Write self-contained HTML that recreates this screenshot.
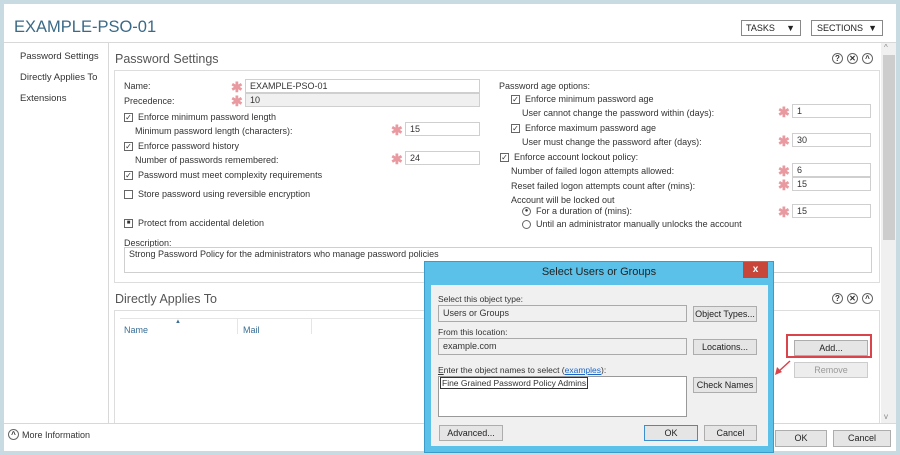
<!DOCTYPE html>
<html><head><meta charset="utf-8"><style>
*{margin:0;padding:0;box-sizing:border-box}
body{width:900px;height:455px;background:#c8dae2;font-family:"Liberation Sans",sans-serif;font-size:9px;color:#333;position:relative;overflow:hidden}
.a{position:absolute;white-space:nowrap}
.inp{position:absolute;border:1px solid #cfcfcf;background:#fff;height:14px;padding:1px 4px;font-size:9px;line-height:11px}
.st{position:absolute;color:#e89aa0;font-size:14px;font-weight:bold;line-height:14px}
.cb{position:absolute;width:9px;height:9px;border:1px solid #666;background:#fff;font-size:8px;line-height:7px;text-align:center}
.btn{position:absolute;border:1px solid #adadad;background:#e5e5e5;text-align:center;font-size:9px;line-height:14px;color:#222}
.ic{position:absolute;width:11px;height:11px;border:1px solid #666;border-radius:50%;font-size:8px;line-height:9px;text-align:center;color:#333;font-weight:bold}
</style></head><body>
<div class="a" style="left:4px;top:4px;width:892px;height:447px;background:#fff"></div>
<div class="a" style="left:14px;top:18px;font-size:16.5px;color:#3a6a88">EXAMPLE-PSO-01</div>
<div class="btn" style="left:741px;top:20px;width:60px;height:16px;background:#fff;border-color:#888;text-align:left;padding-left:4px;font-size:9px">TASKS <span style="position:absolute;right:5px">▼</span></div>
<div class="btn" style="left:811px;top:20px;width:72px;height:16px;background:#fff;border-color:#888;text-align:left;padding-left:5px">SECTIONS <span style="position:absolute;right:5px">▼</span></div>
<div class="a" style="left:4px;top:42px;width:892px;height:1px;background:#d8d8d8"></div>
<div class="a" style="left:108px;top:43px;width:1px;height:380px;background:#d8d8d8"></div>
<div class="a" style="left:20px;top:51px;font-size:9.5px">Password Settings</div>
<div class="a" style="left:20px;top:72px;font-size:9.5px">Directly Applies To</div>
<div class="a" style="left:20px;top:93px;font-size:9.5px">Extensions</div>
<!-- scrollbar -->
<div class="a" style="left:881px;top:43px;width:15px;height:380px;background:#f0f0f0"></div>
<div class="a" style="left:883px;top:55px;width:12px;height:185px;background:#cdcdcd"></div>
<div class="a" style="left:884px;top:43px;font-size:8px;color:#888">^</div>
<div class="a" style="left:884px;top:412px;font-size:8px;color:#888">v</div>
<!-- section1 -->
<div class="a" style="left:115px;top:52px;font-size:12.5px;color:#555">Password Settings</div>
<div class="ic" style="left:832px;top:53px">?</div><div class="ic" style="left:847px;top:53px">✕</div><div class="ic" style="left:862px;top:53px">^</div>
<div class="a" style="left:114px;top:70px;width:766px;height:213px;border:1px solid #ddd"></div>
<div class="a" style="left:124px;top:81px">Name:</div>
<div class="st" style="left:231px;top:80px">✱</div>
<div class="inp" style="left:245px;top:79px;width:235px">EXAMPLE-PSO-01</div>
<div class="a" style="left:124px;top:96px">Precedence:</div>
<div class="st" style="left:231px;top:94px">✱</div>
<div class="inp" style="left:245px;top:93px;width:235px;background:#f0f0f0">10</div>
<div class="cb" style="left:124px;top:113px">✓</div><div class="a" style="left:138px;top:112px">Enforce minimum password length</div>
<div class="a" style="left:135px;top:126px">Minimum password length (characters):</div>
<div class="st" style="left:391px;top:123px">✱</div><div class="inp" style="left:405px;top:122px;width:75px">15</div>
<div class="cb" style="left:124px;top:142px">✓</div><div class="a" style="left:138px;top:141px">Enforce password history</div>
<div class="a" style="left:135px;top:155px">Number of passwords remembered:</div>
<div class="st" style="left:391px;top:152px">✱</div><div class="inp" style="left:405px;top:151px;width:75px">24</div>
<div class="cb" style="left:124px;top:171px">✓</div><div class="a" style="left:138px;top:170px">Password must meet complexity requirements</div>
<div class="cb" style="left:124px;top:190px"></div><div class="a" style="left:138px;top:189px">Store password using reversible encryption</div>
<div class="cb" style="left:124px;top:219px;font-size:6px">■</div><div class="a" style="left:138px;top:218px">Protect from accidental deletion</div>
<div class="a" style="left:499px;top:81px">Password age options:</div>
<div class="cb" style="left:511px;top:95px">✓</div><div class="a" style="left:525px;top:94px">Enforce minimum password age</div>
<div class="a" style="left:522px;top:108px">User cannot change the password within (days):</div>
<div class="st" style="left:778px;top:105px">✱</div><div class="inp" style="left:792px;top:104px;width:79px">1</div>
<div class="cb" style="left:511px;top:124px">✓</div><div class="a" style="left:525px;top:123px">Enforce maximum password age</div>
<div class="a" style="left:522px;top:137px">User must change the password after (days):</div>
<div class="st" style="left:778px;top:134px">✱</div><div class="inp" style="left:792px;top:133px;width:79px">30</div>
<div class="cb" style="left:500px;top:153px">✓</div><div class="a" style="left:514px;top:152px">Enforce account lockout policy:</div>
<div class="a" style="left:511px;top:166px">Number of failed logon attempts allowed:</div>
<div class="st" style="left:778px;top:164px">✱</div><div class="inp" style="left:792px;top:163px;width:79px">6</div>
<div class="a" style="left:511px;top:181px">Reset failed logon attempts count after (mins):</div>
<div class="st" style="left:778px;top:178px">✱</div><div class="inp" style="left:792px;top:177px;width:79px">15</div>
<div class="a" style="left:511px;top:195px">Account will be locked out</div>
<div class="ic" style="left:522px;top:207px;width:9px;height:9px;font-size:6px;line-height:7px">●</div><div class="a" style="left:536px;top:206px">For a duration of (mins):</div>
<div class="st" style="left:778px;top:205px">✱</div><div class="inp" style="left:792px;top:204px;width:79px">15</div>
<div class="ic" style="left:522px;top:220px;width:9px;height:9px"></div><div class="a" style="left:536px;top:219px">Until an administrator manually unlocks the account</div>
<div class="a" style="left:124px;top:238px">Description:</div>
<div class="inp" style="left:124px;top:247px;width:748px;height:26px">Strong Password Policy for the administrators who manage password policies</div>
<!-- section2 -->
<div class="a" style="left:115px;top:292px;font-size:12.5px;color:#555">Directly Applies To</div>
<div class="ic" style="left:832px;top:293px">?</div><div class="ic" style="left:847px;top:293px">✕</div><div class="ic" style="left:862px;top:293px">^</div>
<div class="a" style="left:114px;top:310px;width:766px;height:114px;border:1px solid #ddd;border-bottom:none"></div>
<div class="a" style="left:120px;top:318px;width:520px;height:1px;background:#e5e5e5"></div>
<div class="a" style="left:124px;top:325px;color:#3a6e96">Name</div>
<div class="a" style="left:175px;top:319px;font-size:6px;color:#3a6e96">▲</div>
<div class="a" style="left:237px;top:319px;width:1px;height:15px;background:#e5e5e5"></div>
<div class="a" style="left:243px;top:325px;color:#3a6e96">Mail</div>
<div class="a" style="left:311px;top:319px;width:1px;height:15px;background:#e5e5e5"></div>
<div class="a" style="left:786px;top:334px;width:86px;height:24px;border:2px solid #d9434b"></div>
<div class="btn" style="left:794px;top:340px;width:74px;height:16px">Add...</div>
<div class="btn" style="left:794px;top:362px;width:74px;height:16px;color:#999;background:#ededed;border-color:#ccc">Remove</div>
<svg class="a" style="left:770px;top:355px" width="25" height="25"><line x1="20" y1="6" x2="8" y2="17" stroke="#d9434b" stroke-width="1.5"/><path d="M5 20 L7 12 L12 17 Z" fill="#d9434b"/></svg>
<!-- footer -->
<div class="a" style="left:4px;top:423px;width:892px;height:1px;background:#d8d8d8"></div>
<div class="ic" style="left:8px;top:429px">^</div><div class="a" style="left:22px;top:430px">More Information</div>
<div class="btn" style="left:775px;top:430px;width:52px;height:17px">OK</div>
<div class="btn" style="left:833px;top:430px;width:58px;height:17px">Cancel</div>
<!-- dialog -->
<div class="a" style="left:424px;top:261px;width:350px;height:192px;background:#5cc1e9;border:1px solid #3b9ccb"></div>
<div class="a" style="left:424px;top:266px;width:350px;text-align:center;font-size:11px;color:#222">Select Users or Groups</div>
<div class="a" style="left:743px;top:262px;width:25px;height:16px;background:#c8453a;color:#fff;text-align:center;font-size:10px;font-weight:bold;line-height:15px">x</div>
<div class="a" style="left:431px;top:285px;width:337px;height:161px;background:#f0f0f0"></div>
<div class="a" style="left:438px;top:294px;font-size:8.5px">Select this object type:</div>
<div class="inp" style="left:438px;top:305px;width:249px;height:17px;background:#f0f0f0;border-color:#aaa;line-height:13px">Users or Groups</div>
<div class="btn" style="left:693px;top:306px;width:64px;height:16px">Object Types...</div>
<div class="a" style="left:438px;top:327px;font-size:8.5px">From this location:</div>
<div class="inp" style="left:438px;top:338px;width:249px;height:17px;background:#f0f0f0;border-color:#aaa;line-height:13px">example.com</div>
<div class="btn" style="left:693px;top:339px;width:64px;height:16px">Locations...</div>
<div class="a" style="left:438px;top:365px;font-size:8.5px"><u>E</u>nter the object names to select (<u style="color:#1a66c8">examples</u>):</div>
<div class="inp" style="left:438px;top:376px;width:249px;height:41px;border-color:#999;padding:1px"><span style="border:1px solid #333;padding:0 1px;font-size:8.5px">Fine Grained Password Policy Admins</span></div>
<div class="btn" style="left:693px;top:377px;width:64px;height:16px">Check Names</div>
<div class="btn" style="left:439px;top:425px;width:64px;height:16px">Advanced...</div>
<div class="btn" style="left:644px;top:425px;width:54px;height:16px;border-color:#3c8fcc">OK</div>
<div class="btn" style="left:704px;top:425px;width:53px;height:16px">Cancel</div>
</body></html>
